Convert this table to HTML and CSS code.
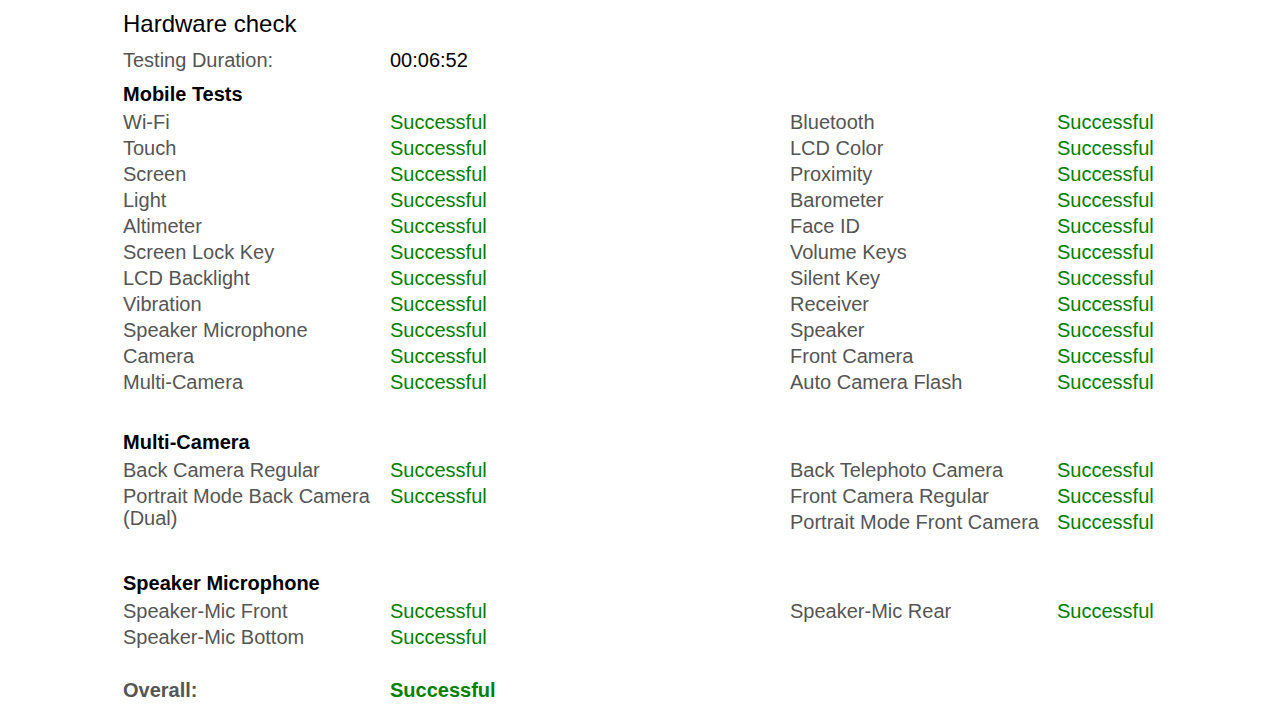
FILE: index.html
```html
<!DOCTYPE html>
<html>
<head>
<meta charset="utf-8">
<link rel="stylesheet" href="styles.css">
</head>
<body>
<div class="page">
  <h1 class="title">Hardware check</h1>
  <div class="duration">
    <span class="label">Testing Duration:</span>
    <span class="time">00:06:52</span>
  </div>

  <section class="section">
    <h2 class="heading">Mobile Tests</h2>
    <div class="pairs">
      <div class="list">
        <span class="label">Wi-Fi</span><span class="ok">Successful</span>
        <span class="label">Touch</span><span class="ok">Successful</span>
        <span class="label">Screen</span><span class="ok">Successful</span>
        <span class="label">Light</span><span class="ok">Successful</span>
        <span class="label">Altimeter</span><span class="ok">Successful</span>
        <span class="label">Screen Lock Key</span><span class="ok">Successful</span>
        <span class="label">LCD Backlight</span><span class="ok">Successful</span>
        <span class="label">Vibration</span><span class="ok">Successful</span>
        <span class="label">Speaker Microphone</span><span class="ok">Successful</span>
        <span class="label">Camera</span><span class="ok">Successful</span>
        <span class="label">Multi-Camera</span><span class="ok">Successful</span>
      </div>
      <div class="list">
        <span class="label">Bluetooth</span><span class="ok">Successful</span>
        <span class="label">LCD Color</span><span class="ok">Successful</span>
        <span class="label">Proximity</span><span class="ok">Successful</span>
        <span class="label">Barometer</span><span class="ok">Successful</span>
        <span class="label">Face ID</span><span class="ok">Successful</span>
        <span class="label">Volume Keys</span><span class="ok">Successful</span>
        <span class="label">Silent Key</span><span class="ok">Successful</span>
        <span class="label">Receiver</span><span class="ok">Successful</span>
        <span class="label">Speaker</span><span class="ok">Successful</span>
        <span class="label">Front Camera</span><span class="ok">Successful</span>
        <span class="label">Auto Camera Flash</span><span class="ok">Successful</span>
      </div>
    </div>
  </section>

  <section class="section">
    <h2 class="heading">Multi-Camera</h2>
    <div class="pairs">
      <div class="list">
        <span class="label">Back Camera Regular</span><span class="ok">Successful</span>
        <span class="label">Portrait Mode Back Camera (Dual)</span><span class="ok">Successful</span>
      </div>
      <div class="list">
        <span class="label">Back Telephoto Camera</span><span class="ok">Successful</span>
        <span class="label">Front Camera Regular</span><span class="ok">Successful</span>
        <span class="label">Portrait Mode Front Camera</span><span class="ok">Successful</span>
      </div>
    </div>
  </section>

  <section class="section section-last">
    <h2 class="heading">Speaker Microphone</h2>
    <div class="pairs">
      <div class="list">
        <span class="label">Speaker-Mic Front</span><span class="ok">Successful</span>
        <span class="label">Speaker-Mic Bottom</span><span class="ok">Successful</span>
      </div>
      <div class="list">
        <span class="label">Speaker-Mic Rear</span><span class="ok">Successful</span>
      </div>
    </div>
  </section>

  <div class="overall">
    <span class="label">Overall:</span>
    <span class="ok">Successful</span>
  </div>
</div>
</body>
</html>
```

FILE: styles.css
```css
html, body {
  margin: 0;
  padding: 0;
  background: #ffffff;
}

body {
  font-family: "Liberation Sans", Arial, sans-serif;
  font-size: 20px;
  line-height: 26px;
  color: #000000;
}

.page {
  padding: 9px 0 0 123px;
}

.title {
  margin: 0;
  font-size: 24px;
  line-height: 30px;
  font-weight: normal;
  color: #000000;
}

.duration,
.overall,
.list {
  display: grid;
  grid-template-columns: 267px auto;
  align-items: start;
}

.duration {
  width: 667px;
  margin-top: 8px;
}

.list > span,
.duration > span,
.overall > span {
  line-height: 22px;
  padding: 2px 0;
}

.label {
  color: #555555;
  padding-right: 10px;
}

.time {
  color: #000000;
}

.ok {
  color: #008000;
}

.section {
  margin-top: 8px;
}

.section + .section {
  margin-top: 34px;
}

.section + .section + .section {
  margin-top: 35px;
}

.heading {
  margin: 0 0 2px 0;
  font-size: 20px;
  line-height: 26px;
  font-weight: bold;
  color: #000000;
}

.pairs {
  display: grid;
  grid-template-columns: 667px auto;
  align-items: start;
}

.overall {
  width: 667px;
  margin-top: 27px;
  font-weight: bold;
}
```
